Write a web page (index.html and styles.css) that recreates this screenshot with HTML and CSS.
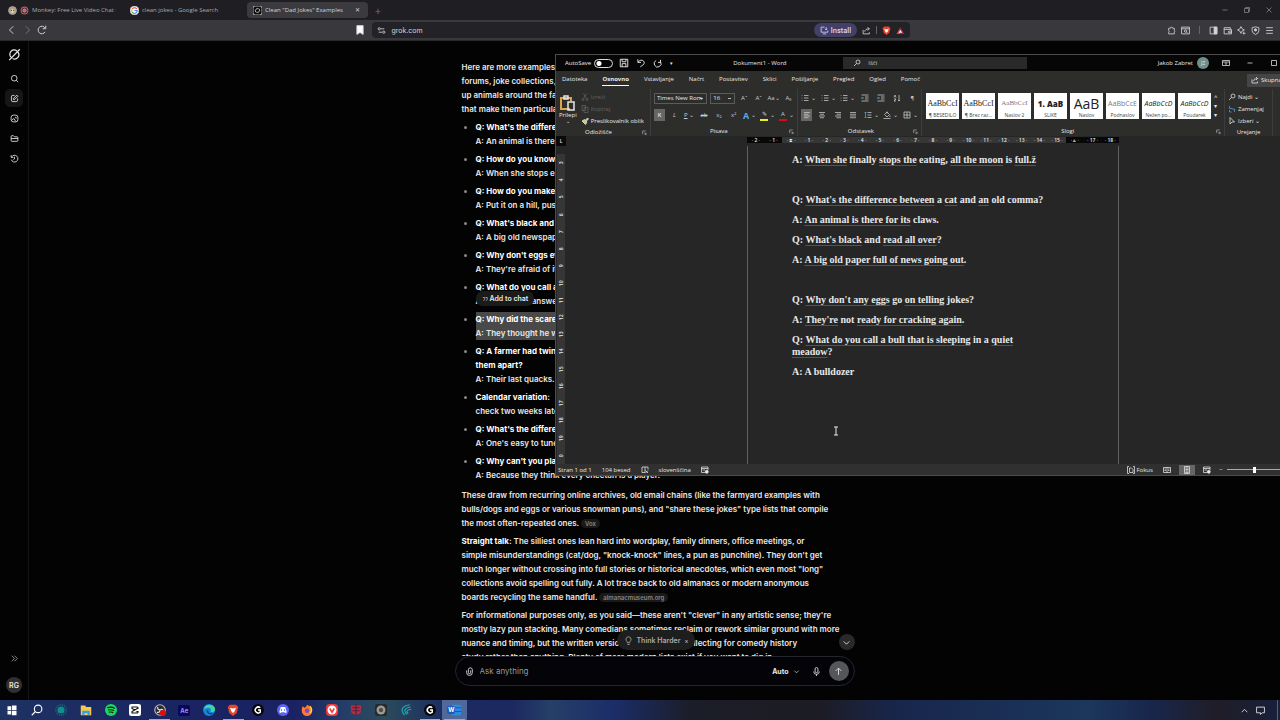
FILE: index.html
```html
<!DOCTYPE html>
<html lang="en">
<head>
    <meta charset="UTF-8">
    <meta name="viewport" content="width=device-width, initial-scale=1.0">
    <title>Desktop</title>
    <link rel="stylesheet" href="styles.css">
</head>
<body>
    <svg class="defs" aria-hidden="true">
        <symbol id="i-slash" viewBox="0 0 16 16"><path d="M4.2 12A5.3 5.3 0 0 1 11 3.6M12.2 5A5.3 5.3 0 0 1 5.6 13M1.5 15 14.5 1.5"/></symbol>
        <symbol id="i-search" viewBox="0 0 16 16"><circle cx="7.500" cy="7.500" r="5"/><path d="m11 11 3.500 3.500"/></symbol>
        <symbol id="i-edit" viewBox="0 0 16 16"><path d="M8 2.500H5A2.500 2.500 0 0 0 2.500 5v6A2.500 2.500 0 0 0 5 13.500h6a2.500 2.500 0 0 0 2.500-2.500V8M6 10l.5-2.500L12 2l2 2-5.500 5.500z"/></symbol>
        <symbol id="i-image" viewBox="0 0 16 16"><rect x="2" y="2" width="12" height="12" rx="4"/><path d="m3 11 4-3 3 5M9 6h2v2"/></symbol>
        <symbol id="i-folder" viewBox="0 0 16 16"><path d="M2 4.500Q2 3 3.500 3H6l2 2h4.500Q14 5 14 6.500v5q0 1.500-1.500 1.500h-9Q2 13 2 11.500zM2 8h12"/></symbol>
        <symbol id="i-history" viewBox="0 0 16 16"><path d="M3 5a6 6 0 1 1-.7 5M2 2v4h4M8 5v3.500L6 10"/></symbol>
        <symbol id="i-puzzle" viewBox="0 0 16 16"><path d="M3 4h3a2 2 0 0 1 4 0h3v4a2 2 0 0 1 0 3v3H3v-3a2 2 0 0 0 0-3z"/></symbol>
        <symbol id="i-down" viewBox="0 0 16 16"><path d="m3 6 5 5 5-5"/></symbol>
        <symbol id="i-share" viewBox="0 0 16 16"><path d="M2 7v7h11v-3M5 10q0-5 8-5M10 2l3 3-3 3"/></symbol>
        <symbol id="i-lines" viewBox="0 0 16 16"><path d="M2 3h12M2 6.500h9M2 10h12M2 13.500h9"/></symbol>
        <symbol id="i-list" viewBox="0 0 16 16"><path d="M6 3h9M6 8h9M6 13h9"/><path class="blue" d="M1 3h2M1 8h2M1 13h2"/></symbol>
        <symbol id="i-indent" viewBox="0 0 16 16"><path d="M1 2h14M8 6h7M8 10h7M1 14h14"/><path class="blue" d="M6 8H1m2-2L1 8l2 2"/></symbol>
        <symbol id="i-sort" viewBox="0 0 16 16"><path d="M12 2v12m-2-2 2 2 2-2M2 7l2-5 2 5M2 10h4l-4 4h4"/></symbol>
        <symbol id="i-spacing" viewBox="0 0 16 16"><path d="M7 3h8M7 8h8M7 13h8"/><path class="blue" d="M3 2v12M1 4l2-2 2 2M1 12l2 2 2-2"/></symbol>
        <symbol id="i-fill" viewBox="0 0 16 16"><path d="m3 7 5-5 5 5-5 5zM8 1v4M14 9v3M1 15h14"/></symbol>
        <symbol id="i-grid" viewBox="0 0 16 16"><path d="M2 2h12v12H2zM8 2v12M2 8h12"/></symbol>
        <symbol id="i-page" viewBox="0 0 16 16"><path d="M3 1h10v14H3zM5 4h6M5 7h6M5 10h6M5 13h6"/></symbol>
        <symbol id="i-focus" viewBox="0 0 16 16"><path d="M4 1H1v14h3M12 1h3v14h-3M5 4h4l3 3v6H5z"/></symbol>
        <symbol id="i-book" viewBox="0 0 16 16"><path d="M1 3h14v10H1zM8 3v11M3 6h3M3 9h3M10 6h3M10 9h3"/></symbol>
        <symbol id="i-proof" viewBox="0 0 16 16"><path d="M8 2H2v11h6M8 2v11M8 2h6v5M9 9l5 5M14 9l-5 5"/></symbol>
        <symbol id="i-globe" viewBox="0 0 16 16"><path d="M1 2h13v6M1 2v11h7M1 5h13M3 8h5"/><circle cx="11.500" cy="11.500" r="3" fill="currentColor"/></symbol>
        <symbol id="i-launch" viewBox="0 0 16 16"><path d="M2 13V3h10M7 8l6 6M13 9v5H8"/></symbol>
        <symbol id="i-bubble" viewBox="0 0 16 16"><path d="M1 2h14v10h-4l-3 3v-3H1z"/></symbol>
        <symbol id="i-g" viewBox="0 0 16 16"><circle cx="8" cy="8" r="8" fill="#080808" stroke="none"/><path d="M11 5a4 4 0 1 0 0 6V8H8" stroke="#fff" stroke-width="2"/></symbol>
        <symbol id="i-brave" viewBox="0 0 16 16"><path d="M4 1h8l3 3-2 8-5 4-5-4-2-8z" fill="#e8452c" stroke="none"/><path d="m4 5 4 1 4-1-2 5-2 2-2-2z" fill="#fff" stroke="none"/></symbol>
    </svg>

    <header class="tabs">
        <div class="tab first">
            <svg viewBox="0 0 16 16"><circle cx="8" cy="8" r="7" fill="#b99a70"/><circle cx="8" cy="9" r="4" fill="#ead2a8"/><path d="M6 7v2M10 7v2" stroke="#322"/></svg>
            <svg viewBox="0 0 16 16"><circle cx="8" cy="8" r="6" stroke="#c6545c" stroke-width="2"/><circle cx="8" cy="8" r="3" fill="#d8575f"/></svg>
            <span>Monkey: Free Live Video Chat to</span>
        </div>
        <div class="tab second">
            <svg viewBox="0 0 16 16"><circle cx="8" cy="8" r="8" fill="#fff"/><path d="M12 5a5 5 0 0 0-8 0" stroke="#ea4335" stroke-width="2"/><path d="M4 5a5 5 0 0 0 0 6" stroke="#fbbc05" stroke-width="2"/><path d="M4 11a5 5 0 0 0 7 1" stroke="#34a853" stroke-width="2"/><path d="M11 12q2-2 2-4H8" stroke="#4285f4" stroke-width="2"/></svg>
            <span>clean jokes - Google Search</span>
        </div>
        <div class="tab active">
            <svg viewBox="0 0 16 16"><rect width="16" height="16" rx="4" fill="#0b0b0c"/><path d="M5 11a4 4 0 0 1 5-6M11 5a4 4 0 0 1-5 6"/></svg>
            <span>Clean "Dad Jokes" Examples</span>
            <button aria-label="Close tab">✕</button>
        </div>
        <button class="new-tab" aria-label="New tab">+</button>
        <div class="win-buttons">
            <button aria-label="Minimize"><svg viewBox="0 0 16 16"><path d="M3 8h10"/></svg></button>
            <button aria-label="Restore"><svg viewBox="0 0 16 16"><path d="M3 5h8v8H3zM5 5V3h8v8h-2"/></svg></button>
            <button aria-label="Close"><svg viewBox="0 0 16 16"><path d="m3 3 10 10M13 3 3 13"/></svg></button>
        </div>
    </header>

    <nav class="toolbar">
        <div class="nav-buttons">
            <button aria-label="Back"><svg viewBox="0 0 16 16"><path d="m10 2-6 6 6 6"/></svg></button>
            <button aria-label="Forward" class="dim"><svg viewBox="0 0 16 16"><path d="m6 2 6 6-6 6"/></svg></button>
            <button aria-label="Reload"><svg viewBox="0 0 16 16"><path d="M13 11a6 6 0 1 1 0-6M14 1v5H9"/></svg></button>
        </div>
        <button class="bookmark" aria-label="Bookmark"><svg viewBox="0 0 16 16"><path d="M3 1h10v14l-5-3-5 3z" fill="#fff"/></svg></button>
        <div class="address">
            <svg viewBox="0 0 16 16"><circle cx="4" cy="5" r="2"/><path d="M7 5h6M3 11h6"/><circle cx="12" cy="11" r="2"/></svg>
            <input type="text" value="grok.com" aria-label="Address">
            <button class="install"><svg viewBox="0 0 16 16"><path d="M8 2H2v9h12V8M5 14h6M11 2v5M9 5l2 2 2-2"/></svg>Install</button>
            <svg><use href="#i-share"/></svg>
            <i class="divider"></i>
            <svg><use href="#i-brave"/></svg>
            <svg viewBox="0 0 16 16"><path d="M8 2 1 14h7z" fill="#ff4724" stroke="none"/><path d="m8 2 7 12H8z" fill="#9e1f63" stroke="none"/><path d="m8 7-3 5h6z" fill="#fff" stroke="none"/></svg>
        </div>
        <div class="extensions">
            <svg><use href="#i-puzzle"/></svg>
            <svg viewBox="0 0 16 16"><path d="M1 2h14v12H1zM1 5h14"/><circle cx="8" cy="9" r="2"/><path d="m10 11 2 2"/></svg>
            <i class="divider"></i>
            <svg viewBox="0 0 16 16"><path d="M2 2h12v12H2z"/><path d="M9 2h5v12H9z" fill="currentColor"/></svg>
            <svg viewBox="0 0 16 16"><path d="M2 3h11v3h2v8H2zM2 6h11M10 9h5v3h-5z"/></svg>
            <svg viewBox="0 0 16 16"><path d="m7 1 2 4 4 2-4 2-2 4-2-4-4-2 4-2zM12 10v5M10 13h5"/></svg>
            <svg viewBox="0 0 16 16"><path d="M2 3q6-3 12 0v5q0 5-6 7-6-2-6-7z"/><circle cx="8" cy="7" r="2" fill="currentColor"/></svg>
            <svg viewBox="0 0 16 16"><path d="M2 3h12M2 8h12M2 13h12"/></svg>
        </div>
    </nav>

    <main class="desktop">
        <aside class="sidebar">
            <button aria-label="Home"><svg class="logo"><use href="#i-slash"/></svg></button>
            <button aria-label="Search"><svg><use href="#i-search"/></svg></button>
            <button aria-label="New chat" class="current"><svg><use href="#i-edit"/></svg></button>
            <button aria-label="Images"><svg><use href="#i-image"/></svg></button>
            <button aria-label="Projects"><svg><use href="#i-folder"/></svg></button>
            <button aria-label="History"><svg><use href="#i-history"/></svg></button>
            <button aria-label="Expand" class="expand"><svg viewBox="0 0 16 16"><path d="m3 3 5 5-5 5M8 3l5 5-5 5"/></svg></button>
            <button class="avatar">RG</button>
        </aside>

        <section class="chat">
            <div class="conversation">
                <p>Here are more examples of clean<br>forums, joke collections, and<br>up animals around the farm<br>that make them particularly</p>
                <ul>
                    <li><b>Q: What's the difference</b><br>A: An animal is there</li>
                    <li><b>Q: How do you know</b><br>A: When she stops eating</li>
                    <li><b>Q: How do you make</b><br>A: Put it on a hill, push</li>
                    <li><b>Q: What's black and white</b><br>A: A big old newspaper</li>
                    <li><b>Q: Why don't eggs ever</b><br>A: They're afraid of it</li>
                    <li class="menu-anchor"><b>Q: What do you call a</b><br>A: The classic answer
                        <button class="add-chat"><svg viewBox="0 0 16 16"><path d="M2 4h5v5L4 13M9 4h5v5l-3 4"/></svg>Add to chat</button></li>
                    <li><span class="selected"><b>Q: Why did the scarecrow</b><br>A: They thought he was</span></li>
                    <li><b>Q: A farmer had twins</b><br><b>them apart?</b><br>A: Their last quacks. (A</li>
                    <li><b>Calendar variation:</b><br>check two weeks later</li>
                    <li><b>Q: What's the difference</b><br>A: One's easy to tune</li>
                    <li><b>Q: Why can't you play</b><br>A: Because they think every cheetah is a player.</li>
                </ul>
                <p>These draw from recurring online archives, old email chains (like the farmyard examples with<br>bulls/dogs and eggs or various snowman puns), and "share these jokes" type lists that compile<br>the most often-repeated ones. <a class="source" href="#">Vox</a></p>
                <p><b>Straight talk:</b> The silliest ones lean hard into wordplay, family dinners, office meetings, or<br>simple misunderstandings (cat/dog, "knock-knock" lines, a pun as punchline). They don't get<br>much longer without crossing into full stories or historical anecdotes, which even most "long"<br>collections avoid spelling out fully. A lot trace back to old almanacs or modern anonymous<br>boards recycling the same handful. <a class="source" href="#">almanacmuseum.org</a></p>
                <p>For informational purposes only, as you said—these aren't "clever" in any artistic sense; they're<br>mostly lazy pun stacking. Many comedians sometimes reclaim or rework similar ground with more<br>nuance and timing, but the written versions are worth the collecting for comedy history<br>study rather than anything. Plenty of more modern lists exist if you want to dig in.</p>
            </div>
            <button class="think"><svg viewBox="0 0 16 16"><path d="M6 12q0-2-2-4a4.500 4.500 0 1 1 8 0q-2 2-2 4zM6 15h4"/></svg>Think Harder<small>×</small></button>
            <button class="scroll-down" aria-label="Scroll down"><svg><use href="#i-down"/></svg></button>
            <form class="composer">
                <svg viewBox="0 0 16 16"><path d="M3 6v4a5 5 0 0 0 10 0V5a3.500 3.500 0 0 0-7 0v5a2 2 0 0 0 4 0V6"/></svg>
                <input type="text" placeholder="Ask anything" aria-label="Ask anything">
                <button type="button" class="mode">Auto<svg><use href="#i-down"/></svg></button>
                <button type="button" class="mic" aria-label="Dictate"><svg viewBox="0 0 16 16"><rect x="5.500" y="1" width="5" height="9" rx="2.500"/><path d="M3 8a5 5 0 0 0 10 0M8 13v3"/></svg></button>
                <button type="button" class="send" aria-label="Send"><svg viewBox="0 0 16 16"><path d="M8 14V2M3 7l5-5 5 5"/></svg></button>
            </form>
        </section>

        <section class="word">
            <div class="word-title">
                <label class="autosave">AutoSave <input type="checkbox"></label>
                <div class="quick">
                    <svg viewBox="0 0 16 16"><path d="M2 2h12v12H2zM5 2v4h6V2M5 14v-5h6v5"/></svg>
                    <svg viewBox="0 0 16 16"><path d="M3 2v5h5M3 7q5-6 9-2t-5 9"/></svg>
                    <svg viewBox="0 0 16 16"><path d="M12 3v4H8M12 6a5.500 5.500 0 1 1-7-2"/></svg>
                    <small>▾</small>
                </div>
                <span class="doc-name">Dokument1 - Word</span>
                <div class="word-search"><svg viewBox="0 0 16 16"><circle cx="10" cy="6" r="4"/><path d="m7 9-5 5"/></svg><input type="text" placeholder="Išči" aria-label="Išči"></div>
                <div class="account">Jakob Zabret <i>JZ</i></div>
                <div class="word-buttons">
                    <button aria-label="Ribbon options"><svg viewBox="0 0 16 16"><path d="M1 3h14v10H1zM1 6h14M8 12V8M6 9l2-2 2 2"/></svg></button>
                    <button aria-label="Minimize"><svg viewBox="0 0 16 16"><path d="M3 8h10"/></svg></button>
                    <button aria-label="Maximize"><svg viewBox="0 0 16 16"><path d="M3 3h10v10H3z"/></svg></button>
                    <button aria-label="Close"><svg viewBox="0 0 16 16"><path d="m3 3 10 10M13 3 3 13"/></svg></button>
                </div>
            </div>
            <div class="word-tabs">
                <a href="#">Datoteka</a><a href="#" class="on">Osnovno</a><a href="#">Vstavljanje</a><a href="#">Načrt</a><a href="#">Postavitev</a><a href="#">Sklici</a><a href="#">Pošiljanje</a><a href="#">Pregled</a><a href="#">Ogled</a><a href="#">Pomoč</a>
                <button class="share"><svg><use href="#i-share"/></svg>Skupna raba</button>
            </div>
            <div class="ribbon">
                <div class="group clipboard">
                    <div class="tools">
                        <button class="paste"><svg viewBox="0 0 16 16"><path d="M10 14H1V3h10v3" stroke="#d8a54a" stroke-width="2"/><path d="M4 1h4v3H4zM8 7h6v8H8z"/></svg>Prilepi<small>⌄</small></button>
                        <div class="stack">
                            <button class="off"><svg viewBox="0 0 16 16"><path d="m5 1 6 10M11 1 5 11"/><circle cx="4" cy="13" r="2"/><circle cx="12" cy="13" r="2"/></svg>Izreži</button>
                            <button class="off"><svg viewBox="0 0 16 16"><path d="M2 1h7v10H2zM6 5h8v10H6z"/></svg>Kopiraj</button>
                            <button><svg viewBox="0 0 16 16"><path d="m9 6 4-4 2 2-4 4M2 8l5-3 5 5-3 5z" fill="#c9c58a"/></svg>Preslikovalnik oblik</button>
                        </div>
                    </div>
                    <footer>Odložišče<svg><use href="#i-launch"/></svg></footer>
                </div>
                <div class="group font">
                    <div class="tools rows">
                        <div class="row">
                            <select class="family" aria-label="Font"><option>Times New Rom</option></select><select class="size" aria-label="Size"><option>16</option></select>
                            <button>Aˆ</button><button>Aˇ</button><button>Aa⌄</button><button>A₀</button>
                        </div>
                        <div class="row">
                            <button class="pressed"><b>K</b></button><button><i>L</i></button><button><u>P</u> ⌄</button><button><s>ab</s></button><button>x₂</button><button>x²</button><button class="glow">A<small>⌄</small></button><button class="drop"><span class="marker">✎</span>⌄</button><button class="drop"><span class="ink">A</span>⌄</button>
                        </div>
                    </div>
                    <footer>Pisava<svg><use href="#i-launch"/></svg></footer>
                </div>
                <div class="group para">
                    <div class="tools rows">
                        <div class="row">
                            <button aria-label="Bullets"><svg><use href="#i-list"/></svg>⌄</button><button aria-label="Numbers"><svg><use href="#i-list"/></svg>⌄</button><button aria-label="Levels"><svg><use href="#i-list"/></svg>⌄</button><button aria-label="Outdent"><svg><use href="#i-indent"/></svg></button><button aria-label="Indent"><svg><use href="#i-indent"/></svg></button><button aria-label="Sort"><svg><use href="#i-sort"/></svg></button><button>¶</button>
                        </div>
                        <div class="row">
                            <button class="pressed" aria-label="Left"><svg><use href="#i-lines"/></svg></button><button aria-label="Center"><svg viewBox="0 0 16 16"><path d="M2 3h12M4 6.500h8M2 10h12M4 13.500h8"/></svg></button><button aria-label="Right"><svg viewBox="0 0 16 16"><path d="M2 3h12M5 6.500h9M2 10h12M5 13.500h9"/></svg></button><button aria-label="Justify"><svg viewBox="0 0 16 16"><path d="M2 3h12M2 6.500h12M2 10h12M2 13.500h12"/></svg></button><button aria-label="Spacing"><svg><use href="#i-spacing"/></svg>⌄</button><button aria-label="Fill"><svg><use href="#i-fill"/></svg>⌄</button><button aria-label="Borders"><svg><use href="#i-grid"/></svg>⌄</button>
                        </div>
                    </div>
                    <footer>Odstavek<svg><use href="#i-launch"/></svg></footer>
                </div>
                <div class="group styles">
                    <div class="gallery">
                        <button><span class="serif">AaBbCcI</span>¶ BESEDILO</button>
                        <button><span class="serif">AaBbCcI</span>¶ Brez raz...</button>
                        <button><span class="serif pale">AaBbCcI</span>Naslov 2</button>
                        <button><span class="heavy">1. AaB</span>SLIKE</button>
                        <button><span class="large">AaB</span>Naslov</button>
                        <button><span class="pale">AaBbCcE</span>Podnaslov</button>
                        <button><span class="slant">AaBbCcD</span>Nežen po...</button>
                        <button><span class="slant">AaBbCcD</span>Poudarek</button>
                        <div class="arrows"><i>˄</i><i>▾</i><i>▾</i></div>
                    </div>
                    <footer>Slogi<svg><use href="#i-launch"/></svg></footer>
                </div>
                <div class="group editing">
                    <div class="stack">
                        <button><svg viewBox="0 0 16 16"><circle cx="10" cy="6" r="4"/><path d="m7 9-5 5"/></svg>Najdi ⌄</button>
                        <button><svg viewBox="0 0 16 16"><path class="blue" d="M3 2v5h5M13 14V8H8M3 10v4h4"/></svg>Zamenjaj</button>
                        <button><svg viewBox="0 0 16 16"><path d="m4 1 9 9H8l-4 4z"/></svg>Izberi ⌄</button>
                    </div>
                    <footer>Urejanje</footer>
                </div>
            </div>
            <div class="ruler">
                <i class="corner">L</i>
                <div class="scale"><i class="out">2</i><i class="out">1</i><i class="mark">⧗</i><i>1</i><i>2</i><i>3</i><i>4</i><i>5</i><i>6</i><i>7</i><i>8</i><i>9</i><i>10</i><i>11</i><i>12</i><i>13</i><i>14</i><i>15</i><i class="out">▵</i><i class="out">17</i><i class="out">18</i></div>
            </div>
            <div class="editor">
                <div class="side-scale"><i>3</i><i>4</i><i>5</i><i>6</i><i>7</i><i>8</i><i>9</i><i>10</i><i>11</i><i>12</i><i>13</i><i>14</i><i>15</i><i>16</i><i>17</i><i>18</i><i>19</i><i>0</i></div>
                <article class="page">
                    <p>A: <u>When she</u> finally <u>stops the</u> eating, <u>all the moon</u> is <u>full.ž</u></p>
                    <p>&nbsp;</p>
                    <p>Q: <u>What's the difference between</u> a <u>cat</u> and <u>an</u> old comma?</p>
                    <p>A: <u>An animal is there for its</u> claws.</p>
                    <p>Q: <u>What's black</u> and <u>read all over</u>?</p>
                    <p>A: <u>A big old paper full of news going out</u>.</p>
                    <p>&nbsp;</p>
                    <p>Q: <u>Why don't any eggs</u> go <u>on telling</u> jokes?</p>
                    <p>A: <u>They're</u> not <u>ready for cracking again</u>.</p>
                    <p>Q: <u>What do you call a bull that is sleeping</u> in a <u>quiet</u><br><u>meadow</u>?</p>
                    <p>A: A bulldozer</p>
                </article>
            </div>
            <div class="status">
                <span>Stran 1 od 1</span><span>104 besed</span><svg><use href="#i-proof"/></svg><span>slovenščina</span><svg><use href="#i-globe"/></svg>
                <div class="views">
                    <button class="focus"><svg><use href="#i-focus"/></svg>Fokus</button>
                    <button aria-label="Read"><svg><use href="#i-book"/></svg></button>
                    <button class="pressed" aria-label="Print layout"><svg><use href="#i-page"/></svg></button>
                    <button aria-label="Web layout"><svg><use href="#i-globe"/></svg></button>
                    <span>−</span><input type="range" aria-label="Zoom"><span>+</span>
                </div>
            </div>
        </section>
        <svg class="caret" viewBox="0 0 6 10"><path d="M1 1h4M3 1v8M1 9h4"/></svg>
    </main>

    <footer class="taskbar">
        <div class="apps">
            <button aria-label="Start"><svg viewBox="0 0 16 16"><path d="M2 3h5v5H2zM8 2h6v6H8zM2 9h5v5H2zM8 9h6v6H8z" fill="#fff" stroke="none"/></svg></button>
            <button aria-label="Search"><svg viewBox="0 0 16 16"><circle cx="9.500" cy="6.500" r="5" stroke="#fff"/><path d="m6 10-5 5" stroke="#fff"/></svg></button>
            <button aria-label="Assistant"><svg viewBox="0 0 16 16"><circle cx="8" cy="8" r="4" fill="#108f8c" stroke="#108f8c"/><circle cx="8" cy="8" r="7" stroke="#18706f" stroke-dasharray="2 1"/></svg></button>
            <button aria-label="Files"><svg viewBox="0 0 16 16"><path d="M1 2h6l1 2h7v11H1z" fill="#f7c84b" stroke="none"/><path d="M3 9h10v6h-3v-3H6v3H3z" fill="#3b9de2" stroke="none"/></svg></button>
            <button aria-label="Music"><svg viewBox="0 0 16 16"><circle cx="8" cy="8" r="8" fill="#1ed760" stroke="none"/><path d="M3 5q6-2 10 1M4 8q5-1 8 1M5 11q4-1 6 1" stroke="#10251a"/></svg></button>
            <button aria-label="Video editor"><svg viewBox="0 0 16 16"><rect width="16" height="16" rx="3" fill="#fff" stroke="none"/><path d="M13 5 4 10v2h7v-1M13 11 4 6V4h7v1" stroke="#111"/></svg></button>
            <button aria-label="Recorder" class="open"><svg viewBox="0 0 16 16"><circle cx="8" cy="8" r="7" fill="#302b31" stroke="#bbb"/><path d="M8 8q-4-1-3-4M8 8q4-2 4 1M8 8q0 4-4 3"/><circle cx="12" cy="12" r="4" fill="#e50b0b" stroke="none"/></svg></button>
            <button aria-label="Effects"><span class="ae">Ae</span></button>
            <button aria-label="Edge"><svg viewBox="0 0 16 16"><circle cx="8" cy="8" r="8" fill="#1686d9" stroke="none"/><path d="M1 7C3-2 17 0 16 8q-1 4-6 2 2-5-3-5-4 0-6 2" fill="#3cd7a0" stroke="none"/><path d="M6 8q-1 6 7 5" stroke="#0b4597" stroke-width="2"/></svg></button>
            <button aria-label="Brave" class="open"><svg><use href="#i-brave"/></svg></button>
            <button aria-label="G Hub"><svg><use href="#i-g"/></svg></button>
            <button aria-label="Discord"><svg viewBox="0 0 16 16"><circle cx="8" cy="8" r="8" fill="#5865f2" stroke="none"/><path d="M5 4h6l2 7-2 1-1-1H6l-1 1-2-1z" fill="#fff" stroke="none"/><path d="M6 7v2M10 7v2" stroke="#5865f2"/></svg></button>
            <button aria-label="Firefox"><svg viewBox="0 0 16 16"><path d="M2 3 5 5q2-1 3-4 7 3 7 8a7 7 0 0 1-14 0q0-3 1-6" fill="#ff7b29" stroke="none"/><circle cx="8" cy="9" r="3" fill="#8545cf" stroke="none"/><path d="M12 3q4 5 0 9" stroke="#ffd43b" stroke-width="2"/></svg></button>
            <button aria-label="Vivaldi"><svg viewBox="0 0 16 16"><rect width="16" height="16" rx="5" fill="#ef3939" stroke="none"/><circle cx="8" cy="8" r="6" fill="#fff" stroke="none"/><path d="m5 6 3 5 3-5" stroke="#ef3939" stroke-width="2"/></svg></button>
            <button aria-label="Game"><svg viewBox="0 0 16 16"><path d="M1 2h14l-1 10-6 3-6-3z" fill="#b52f43" stroke="none"/><path d="M8 0v16M3 5h10M3 9h10" stroke="#53203c"/></svg></button>
            <button aria-label="Disc"><svg viewBox="0 0 16 16"><rect width="16" height="16" rx="3" fill="#29292c" stroke="none"/><circle cx="8" cy="8" r="6" fill="#999b91" stroke="none"/><circle cx="8" cy="8" r="2" fill="#555" stroke="#444"/></svg></button>
            <button aria-label="Waves"><svg viewBox="0 0 16 16"><path d="M6 15Q-3 4 13 1M9 14Q2 6 14 4M11 13Q6 8 15 7" stroke="#22aeb5"/></svg></button>
            <button aria-label="G Hub window" class="open"><svg><use href="#i-g"/></svg></button>
            <button aria-label="Word" class="open focused"><svg viewBox="0 0 16 16"><rect x="4" y="1" width="12" height="14" rx="1" fill="#2b8be0" stroke="none"/><path d="M4 5h12M4 10h12" stroke="#1959a9"/></svg><span class="w">W</span></button>
        </div>
        <div class="tray">
            <button aria-label="Hidden icons"><svg viewBox="0 0 16 16"><path d="m3 11 5-5 5 5"/></svg></button>
            <button aria-label="Notifications"><svg><use href="#i-bubble"/></svg></button>
        </div>
    </footer>
</body>
</html>
```
FILE: styles.css
```css
* {
    box-sizing: border-box;
}

body {
    margin: 0;
    height: 100vh;
    display: flex;
    flex-direction: column;
    overflow: hidden;
    background: #030303;
    color: #e8e8e8;
    font-family: Inter, sans-serif;
    font-size: 8px;
}

button, input, select {
    font: inherit;
    color: inherit;
    background: none;
    border: 0;
    padding: 0;
    margin: 0;
    outline: 0;
}

button {
    display: flex;
    align-items: center;
    justify-content: center;
    white-space: nowrap;
}

a {
    color: inherit;
    text-decoration: none;
}

svg {
    width: 9px;
    height: 9px;
    flex: none;
    fill: none;
    stroke: currentColor;
    stroke-width: 1.5;
}

.defs {
    position: absolute;
    width: 0;
    height: 0;
}

.blue {
    stroke: #5aa0d8;
}

/* browser */
.tabs {
    height: 20px;
    flex: none;
    display: flex;
    align-items: center;
    background: #1f1e23;
    color: #aaa9ad;
    font-family: "Open Sans", sans-serif;
    font-size: 6px;
}

.tab {
    display: flex;
    align-items: center;
    gap: 3px;
    height: 16px;
    padding: 0 6px;
}

.tab span {
    flex: 1;
    min-width: 0;
    white-space: nowrap;
    overflow: hidden;
}

.first {
    width: 124px;
    padding: 0 8px;
}

.second {
    width: 123px;
}

.active {
    width: 121px;
    background: #3b3a3f;
    border-radius: 4px;
    color: #d5d4d8;
}

.active button {
    width: 10px;
}

.new-tab {
    width: 20px;
    font-size: 11px;
    color: #77767b;
}

.win-buttons {
    margin-left: auto;
    display: flex;
    gap: 14px;
    padding-right: 7px;
    color: #88878c;
}

.win-buttons svg {
    width: 8px;
    height: 8px;
}

.toolbar {
    height: 21px;
    flex: none;
    display: flex;
    align-items: center;
    justify-content: space-between;
    background: #39383c;
    color: #d4d3d6;
    border-bottom: 1px solid #29282b;
}

.nav-buttons {
    display: flex;
    gap: 5px;
    padding-left: 7px;
}

.nav-buttons svg, .bookmark svg {
    width: 10px;
    height: 10px;
}

.dim {
    color: #77767a;
}

.bookmark {
    margin-left: auto;
    margin-right: 7px;
}

.address {
    width: 42%;
    max-width: 540px;
    height: 16px;
    display: flex;
    align-items: center;
    gap: 5px;
    padding: 0 5px;
    background: #232227;
    border-radius: 4px;
    font-size: 7px;
}

.address input {
    flex: 1;
    min-width: 0;
}

.install {
    height: 14px;
    padding: 0 6px;
    gap: 2px;
    border-radius: 7px;
    background: #423f68;
    color: #d6d2f7;
    font-weight: 600;
    font-size: 7px;
}

.divider {
    width: 1px;
    height: 8px;
    background: #66656a;
}

.extensions {
    flex: 0 1 370px;
    display: flex;
    justify-content: flex-end;
    align-items: center;
    gap: 5px;
    padding-right: 6px;
}

.extensions .divider {
    margin: 0 4px;
}

/* chat */
.desktop {
    position: relative;
    flex: 1;
    min-height: 0;
    display: flex;
    overflow: hidden;
}

.sidebar {
    width: 29px;
    padding: 4px 5px 5px;
    border-right: 1px solid #151515;
    display: flex;
    flex-direction: column;
    gap: 2px;
}

.sidebar button {
    width: 18px;
    height: 18px;
    border-radius: 5px;
}

.sidebar button:first-child {
    margin-bottom: 4px;
}

.sidebar .logo {
    width: 13px;
    height: 13px;
}

.sidebar .current {
    background: #161616;
}

.sidebar .expand {
    margin-top: auto;
    color: #999;
}

.sidebar .avatar {
    width: 16px;
    height: 16px;
    margin: 8px 0 2px 1px;
    border-radius: 50%;
    background: #303030;
    font-weight: 600;
    font-size: 7px;
}

.chat {
    position: relative;
    width: 400px;
    margin: 0 auto;
    display: flex;
    flex-direction: column;
}

.conversation {
    flex: 1;
    min-height: 0;
    overflow: hidden;
    padding: 19px 0 0 7px;
    line-height: 14px;
    font-weight: 600;
    white-space: nowrap;
}

.conversation b {
    font-weight: 700;
    color: #fff;
}

.conversation p {
    margin: 0 0 4px;
}

.conversation ul {
    margin: 0 0 6px;
    padding-left: 14px;
}

.conversation li {
    margin-bottom: 4px;
}

.conversation li::marker {
    color: #888;
}

.menu-anchor {
    position: relative;
}

.add-chat {
    position: absolute;
    left: 0;
    top: 11px;
    height: 15px;
    padding: 0 6px;
    gap: 2px;
    border-radius: 7px;
    background: #1b1b1b;
    font-size: 7px;
}

.add-chat svg {
    width: 6px;
    height: 6px;
}

.selected {
    display: block;
    background: #494949;
}

.source {
    padding: 1px 4px;
    border-radius: 6px;
    background: #191919;
    color: #888;
    font-size: 6px;
    line-height: 8px;
}

.think {
    position: absolute;
    left: 162px;
    bottom: 50px;
    height: 20px;
    padding: 0 7px;
    gap: 4px;
    border-radius: 10px;
    background: #1e1e1e;
    color: #aaa;
    font-size: 7px;
    font-weight: 600;
}

.scroll-down {
    position: absolute;
    right: 0;
    bottom: 50px;
    width: 16px;
    height: 16px;
    border-radius: 50%;
    background: #292929;
}

.composer {
    height: 30px;
    flex: none;
    margin-bottom: 14px;
    padding: 0 5px 0 9px;
    display: flex;
    align-items: center;
    gap: 6px;
    border: 1px solid #25252e;
    border-radius: 15px;
    background: #040408;
}

.composer input {
    flex: 1;
    min-width: 0;
}

.composer input::placeholder {
    color: #999;
    opacity: 1;
}

.mode {
    gap: 4px;
    font-size: 7px;
    font-weight: 700;
}

.mode svg {
    width: 7px;
    height: 7px;
}

.mic {
    margin: 0 2px 0 6px;
}

.send {
    width: 20px;
    height: 20px;
    border-radius: 50%;
    background: #55565a;
}

/* word window */
.word {
    position: absolute;
    left: 555px;
    top: 13px;
    width: 756px;
    height: 422px;
    display: flex;
    flex-direction: column;
    border: 1px solid #4b4b4b;
    background: #262626;
    font-family: "Open Sans", sans-serif;
    font-size: 6px;
    font-weight: 500;
}

.word svg {
    width: 8px;
    height: 8px;
}

.word-title {
    height: 16px;
    flex: none;
    display: flex;
    align-items: center;
    background: #060606;
}

.autosave {
    display: flex;
    align-items: center;
    gap: 3px;
    padding-left: 9px;
}

.autosave input {
    appearance: none;
    width: 19px;
    height: 9px;
    border: 1px solid #ddd;
    border-radius: 5px;
    background: radial-gradient(circle at 4px 50%, #fff 2px, transparent 3px);
}

.quick {
    display: flex;
    align-items: center;
    gap: 7px;
    padding-left: 6px;
}

.quick svg {
    width: 10px;
    height: 10px;
}

.doc-name {
    margin-left: 60px;
    width: 110px;
}

.word-search {
    width: 184px;
    height: 12px;
    display: flex;
    align-items: center;
    gap: 7px;
    padding-left: 10px;
    background: #292929;
}

.word-search input::placeholder {
    color: #ccc;
    opacity: 1;
}

.account {
    margin-left: auto;
    display: flex;
    align-items: center;
    gap: 4px;
}

.account i {
    width: 12px;
    border-radius: 50%;
    background: #6e8f8b;
    line-height: 12px;
    font-size: 5px;
    font-style: normal;
    text-align: center;
}

.word-buttons {
    display: flex;
    margin-left: 5px;
}

.word-buttons button {
    width: 24px;
}

.word-tabs {
    height: 18px;
    flex: none;
    display: flex;
    align-items: center;
    gap: 15px;
    padding-left: 6px;
    background: #2d2d2c;
}

.word-tabs a {
    line-height: 11px;
    border-bottom: 1px solid transparent;
}

.word-tabs .on {
    border-color: #fff;
    font-weight: 700;
}

.share {
    margin-left: auto;
    width: 63px;
    height: 13px;
    gap: 2px;
    padding-left: 4px;
    justify-content: flex-start;
    background: #454545;
}

.ribbon {
    height: 47px;
    flex: none;
    display: flex;
    background: #2d2d2c;
}

.group {
    display: flex;
    flex-direction: column;
    justify-content: space-between;
    padding: 2px 3px 0;
    border-right: 1px solid #3d3d3d;
}

.group footer {
    display: flex;
    justify-content: center;
    line-height: 10px;
}

.group footer svg {
    width: 5px;
    height: 5px;
    margin: 3px 0 0 auto;
}

.group footer:has(svg) {
    padding-left: 40%;
}

.clipboard {
    width: 95px;
}

.clipboard footer:has(svg) {
    padding-left: 26px;
}

.font {
    width: 147px;
}

.para {
    width: 124px;
}

.styles {
    width: 303px;
}

.styles footer:has(svg) {
    padding-left: 46%;
}

.editing {
    width: 48px;
}

.tools {
    display: flex;
    gap: 4px;
}

.paste {
    flex-direction: column;
    line-height: 8px;
}

.paste svg {
    width: 16px;
    height: 16px;
}

.paste small {
    line-height: 4px;
}

.stack {
    display: flex;
    flex-direction: column;
    align-items: flex-start;
}

.stack button {
    height: 12px;
    gap: 2px;
}

.off {
    color: #626262;
}

.tools.rows {
    flex-direction: column;
    gap: 3px;
}

.row {
    height: 14px;
    display: flex;
    align-items: center;
    justify-content: space-between;
}

.row button {
    height: 12px;
    min-width: 11px;
    gap: 2px;
    font-size: 6px;
    color: #ccc;
}

.row select {
    appearance: none;
    height: 11px;
    padding-left: 2px;
    border: 1px solid #5b5b5b;
    background: linear-gradient(#bbb, #bbb) right 3px center / 3px 1px no-repeat;
}

.family {
    width: 53px;
}

.size {
    width: 25px;
}

.pressed {
    background: #666;
}

.row .glow {
    color: #56a9e8;
    font-size: 9px;
    font-weight: 700;
}

.glow small {
    color: #ccc;
    font-size: 6px;
    font-weight: 400;
}

.marker, .ink {
    width: 8px;
    line-height: 9px;
    border-bottom: 2px solid #f1ed25;
}

.ink {
    border-color: #d80d18;
}

.gallery {
    display: flex;
    gap: 3px;
    padding: 2px 0 0 1px;
}

.gallery button {
    width: 33px;
    height: 26px;
    flex-direction: column;
    overflow: hidden;
    background: #fff;
    color: #444;
    font-size: 5px;
}

.gallery span {
    height: 17px;
    line-height: 17px;
    font-size: 8px;
    color: #222;
}

.gallery .serif {
    font-family: "Liberation Serif", serif;
}

.gallery .pale {
    color: #778;
    font-size: 7px;
}

.gallery .heavy {
    font-weight: 800;
}

.gallery .large {
    font-size: 14px;
}

.gallery .slant {
    font-style: italic;
    font-size: 7px;
}

.arrows {
    display: flex;
    flex-direction: column;
    justify-content: space-between;
}

.arrows i {
    line-height: 8px;
    font-style: normal;
}

.ruler {
    position: relative;
    height: 10px;
    flex: none;
    display: flex;
    justify-content: center;
    font-size: 5px;
}

.corner {
    position: absolute;
    left: 0;
    top: 0;
    width: 10px;
    line-height: 10px;
    background: #0a0a0a;
    text-align: center;
}

.ruler i, .side-scale i {
    font-style: normal;
    font-weight: 600;
}

.scale {
    width: 372px;
    display: flex;
    padding: 1px 0 3px;
}

.scale i {
    flex: 1;
    text-align: center;
    line-height: 6px;
    background: #363636;
}

.scale i::before, .scale i::after {
    content: " · ";
    color: #aaa;
}

.scale .out {
    background: #080808;
}

.editor {
    flex: 1;
    min-height: 0;
    display: flex;
    justify-content: center;
    position: relative;
}

.side-scale {
    position: absolute;
    left: 1px;
    top: 8px;
    bottom: 0;
    width: 8px;
    display: flex;
    flex-direction: column;
    background: #363636;
    font-size: 5px;
}

.side-scale i {
    flex: 1;
    writing-mode: vertical-rl;
    transform: rotate(180deg);
    text-align: center;
    line-height: 8px;
}

.page {
    width: 372px;
    padding: 8px 44px;
    border: solid #606060;
    border-width: 0 1px;
    font-family: "Liberation Serif", serif;
    font-size: 10px;
    font-weight: 700;
    line-height: 12px;
    white-space: nowrap;
}

.page p {
    margin: 0 0 8px;
}

.page u {
    text-decoration: underline #a52f3a 1px;
    text-decoration-skip-ink: none;
    text-underline-offset: 2px;
}

.status {
    height: 11px;
    flex: none;
    display: flex;
    align-items: center;
    gap: 10px;
    padding-left: 2px;
    background: #303030;
}

.views {
    margin-left: auto;
    padding-right: 20px;
    display: flex;
    align-items: center;
    gap: 4px;
}

.views button {
    width: 16px;
    height: 10px;
}

.views .focus {
    width: 30px;
    gap: 1px;
}

.views input {
    width: 56px;
    height: 9px;
    appearance: none;
    background: linear-gradient(#aaa, #aaa) center / 100% 1px no-repeat;
}

.views input::-webkit-slider-thumb {
    appearance: none;
    width: 3px;
    height: 6px;
    background: #fff;
}

.caret {
    position: absolute;
    left: 833px;
    top: 385px;
    width: 6px;
    height: 10px;
    stroke-width: 1;
}

/* taskbar */
.taskbar {
    height: 20px;
    flex: none;
    display: flex;
    justify-content: space-between;
    background: linear-gradient(90deg, #1e3263, #192461 15%, #1b2263 23%, #253e68 27%, #2a4b5b 30%, #1b2b60 35%, #1c2860 40%, #263f68 43%, #1c2d68 48%, #1b1d28 54%, #1d1c24 64%, #18264c 70%, #1c365c 85%, #19264b 90%, #201d27 95%, #18203b);
}

.apps {
    width: 467px;
    display: flex;
}

.apps button {
    position: relative;
    flex: 1;
}

.apps svg {
    width: 12px;
    height: 12px;
}

.open::after {
    content: "";
    position: absolute;
    left: 2px;
    right: 2px;
    bottom: 0;
    height: 1px;
    background: #77b6f2;
}

.apps .focused {
    background: #51689a;
}

.ae, .w {
    width: 12px;
    line-height: 11px;
    background: #09085b;
    color: #9b91f5;
    border-radius: 2px;
    font-size: 6px;
    font-weight: 700;
}

.w {
    position: absolute;
    left: 5px;
    top: 6px;
    width: 8px;
    line-height: 8px;
    background: #185abd;
    color: #fff;
}

.tray {
    display: flex;
    gap: 7px;
    padding-right: 12px;
    margin-right: 2px;
    border-right: 1px solid #59617a;
}
```
